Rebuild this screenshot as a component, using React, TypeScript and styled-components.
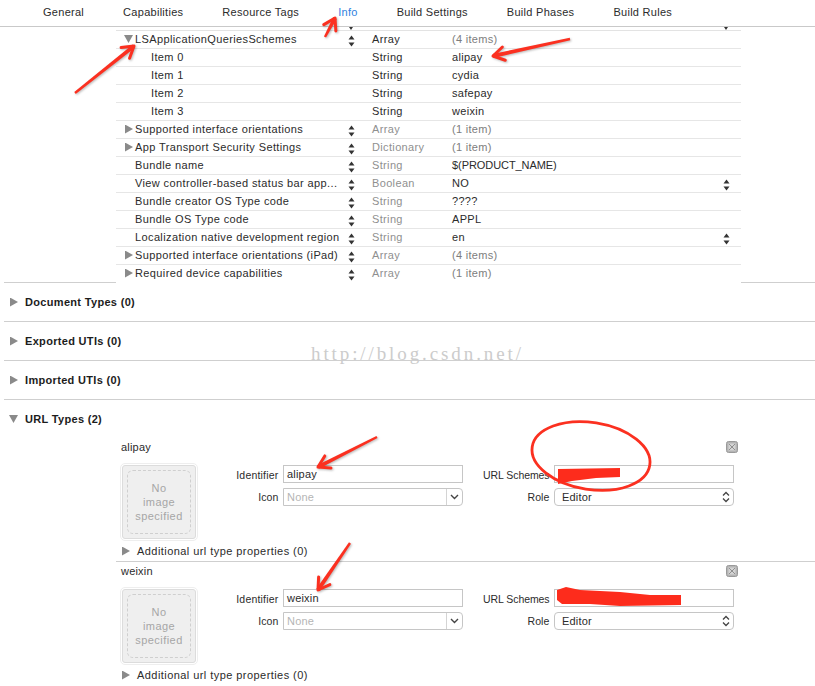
import React from "react";
import styled, { createGlobalStyle } from "styled-components";

const tabs = ["General", "Capabilities", "Resource Tags", "Info", "Build Settings", "Build Phases", "Build Rules"];

type PlistRow = {
  name: string;
  type?: string;
  value: string;
  disclosure?: "open" | "closed";
  item?: boolean;
  muted?: boolean;
  mutedValue?: boolean;
  menu?: boolean;
  tight?: boolean;
};

const plistRows: PlistRow[] = [
  { name: "LSApplicationQueriesSchemes", type: "Array", value: "(4 items)", disclosure: "open", mutedValue: true },
  { name: "Item 0", type: "String", value: "alipay", item: true },
  { name: "Item 1", type: "String", value: "cydia", item: true },
  { name: "Item 2", type: "String", value: "safepay", item: true },
  { name: "Item 3", type: "String", value: "weixin", item: true },
  { name: "Supported interface orientations", type: "Array", value: "(1 item)", disclosure: "closed", muted: true, mutedValue: true },
  { name: "App Transport Security Settings", type: "Dictionary", value: "(1 item)", disclosure: "closed", muted: true, mutedValue: true },
  { name: "Bundle name", type: "String", value: "$(PRODUCT_NAME)", muted: true, tight: true },
  { name: "View controller-based status bar app...", type: "Boolean", value: "NO", muted: true, menu: true },
  { name: "Bundle creator OS Type code", type: "String", value: "????", muted: true },
  { name: "Bundle OS Type code", type: "String", value: "APPL", muted: true },
  { name: "Localization native development region", type: "String", value: "en", muted: true, menu: true },
  { name: "Supported interface orientations (iPad)", type: "Array", value: "(4 items)", disclosure: "closed", muted: true, mutedValue: true },
  { name: "Required device capabilities", type: "Array", value: "(1 item)", disclosure: "closed", muted: true, mutedValue: true },
];

const arrows = [
  { from: [75, 93], to: [134, 46] },
  { from: [325, 37], to: [335, 18] },
  { from: [570, 39], to: [493, 56] },
  { from: [377, 437], to: [318, 467] },
  { from: [350, 543], to: [318, 590] },
];

const GlobalStyle = createGlobalStyle`
  html, body {
    margin: 0;
    padding: 0;
    background: #ffffff;
  }
  body {
    font-family: "Liberation Sans", Arial, sans-serif;
    font-size: 11px;
    color: #2b2b2b;
  }
`;

const StepperGlyph = () => (
  <StepperSvg width="7" height="12" viewBox="0 0 7 12">
    <path d="M3.5 0.5 L6.5 4.5 L0.5 4.5 Z" fill="#333" />
    <path d="M3.5 11.5 L6.5 7.5 L0.5 7.5 Z" fill="#333" />
  </StepperSvg>
);

// shaft gets thicker towards the head, like a marker stroke
const Arrow = ({ from, to }: { from: number[]; to: number[] }) => {
  const angle = Math.atan2(to[1] - from[1], to[0] - from[0]);
  const nx = -Math.sin(angle);
  const ny = Math.cos(angle);
  const barb = (offset: number) => {
    const a = angle + Math.PI + offset;
    return `${to[0] + Math.cos(a) * 13} ${to[1] + Math.sin(a) * 13}`;
  };
  const shaft = [
    [from[0] + nx * 1.2, from[1] + ny * 1.2],
    [to[0] + nx * 2, to[1] + ny * 2],
    [to[0] - nx * 2, to[1] - ny * 2],
    [from[0] - nx * 1.2, from[1] - ny * 1.2],
  ];
  return (
    <g>
      <polygon points={shaft.map((p) => p.join(",")).join(" ")} />
      <path d={`M${barb(0.55)} L${to[0]} ${to[1]} L${barb(-0.55)}`} />
    </g>
  );
};

const Annotations = () => (
  <AnnotationSvg width="815" height="686" viewBox="0 0 815 686">
    <ArrowGroup>
      {arrows.map((a, i) => (
        <Arrow key={i} from={a.from} to={a.to} />
      ))}
    </ArrowGroup>
    <ellipse cx="591" cy="456" rx="59.5" ry="33.5" transform="rotate(9 591 456)" fill="none" stroke="#fb3020" strokeWidth="2.8" />
    <path d="M558 469 L620 468 L620 477 L596 478 L572 481 L558 484 Z" fill="#fd2c1c" />
    <path d="M557 590 L566 587 L580 590 L620 592 L650 595 L681 595 L681 605 L620 606 L590 604 L562 604 L557 600 Z" fill="#fd2c1c" />
  </AnnotationSvg>
);

const CloseButton = () => (
  <CloseSvg width="12" height="12" viewBox="0 0 12 12">
    <rect x="0.5" y="0.5" width="11" height="11" rx="2" fill="#b4b4b4" stroke="#9a9a9a" />
    <rect x="2.5" y="2.5" width="7" height="7" fill="#d4d4d4" />
    <path d="M3 3 L9 9 M9 3 L3 9" stroke="#8f8f8f" strokeWidth="1" />
  </CloseSvg>
);

const UrlEntry = ({ name, identifier }: { name: string; identifier: string }) => (
  <Entry>
    <EntryTitle>
      <span>{name}</span>
      <CloseButton />
    </EntryTitle>
    <EntryBody>
      <ImageWell>
        <WellInner>
          <WellDashed>
            No
            <br />
            image
            <br />
            specified
          </WellDashed>
        </WellInner>
      </ImageWell>
      <FieldGrid>
        <FieldLabel $drop $spacing={0.2}>
          Identifier
        </FieldLabel>
        <TextField>{identifier}</TextField>
        <FieldLabel $drop $spacing={-0.08}>
          URL Schemes
        </FieldLabel>
        <TextField />
        <FieldLabel>Icon</FieldLabel>
        <ComboField>
          <ComboText>None</ComboText>
          <ComboButton>
            <svg width="9" height="6" viewBox="0 0 9 6">
              <path d="M1 1 L4.5 4.5 L8 1" fill="none" stroke="#444" strokeWidth="1.4" />
            </svg>
          </ComboButton>
        </ComboField>
        <FieldLabel>Role</FieldLabel>
        <PopupField>
          <span>Editor</span>
          <svg width="8" height="12" viewBox="0 0 8 12">
            <path d="M1 4.5 L4 1.5 L7 4.5 M1 7.5 L4 10.5 L7 7.5" fill="none" stroke="#444" strokeWidth="1.3" />
          </svg>
        </PopupField>
      </FieldGrid>
    </EntryBody>
    <AdditionalRow>
      <Disclosure />
      <span>Additional url type properties (0)</span>
    </AdditionalRow>
  </Entry>
);

const App = () => {
  return (
    <Page>
      <GlobalStyle />
      <TabBar>
        {tabs.map((t) => (
          <Tab key={t} $active={t === "Info"}>
            {t}
          </Tab>
        ))}
      </TabBar>

      <PlistTable>
        <StubRow>
          <StubGlyph />
          <StubGlyph />
        </StubRow>
        {plistRows.map((row) => (
          <Row key={row.name}>
            <DisclosureSlot>{row.disclosure && <Disclosure $open={row.disclosure === "open"} />}</DisclosureSlot>
            <KeyCell $item={row.item}>{row.name}</KeyCell>
            <StepperCell>{!row.item && <StepperGlyph />}</StepperCell>
            <TypeCell $muted={row.muted}>{row.type}</TypeCell>
            <ValueCell $muted={row.mutedValue} $tight={row.tight}>
              {row.value}
            </ValueCell>
            <MenuCell>{row.menu && <StepperGlyph />}</MenuCell>
          </Row>
        ))}
      </PlistTable>

      <TableEndDivider>
        <span />
        <span />
      </TableEndDivider>
      <SectionHeader>
        <Disclosure />
        <SectionTitle>Document Types (0)</SectionTitle>
      </SectionHeader>
      <SectionDivider />
      <SectionHeader>
        <Disclosure />
        <SectionTitle>Exported UTIs (0)</SectionTitle>
      </SectionHeader>
      <SectionDivider />
      <SectionHeader>
        <Disclosure />
        <SectionTitle>Imported UTIs (0)</SectionTitle>
      </SectionHeader>
      <SectionDivider />
      <SectionHeader>
        <Disclosure $open />
        <SectionTitle>URL Types (2)</SectionTitle>
      </SectionHeader>

      <UrlEntry name="alipay" identifier="alipay" />
      <EntryDivider />
      <UrlEntry name="weixin" identifier="weixin" />

      <Watermark>http://blog.csdn.net/</Watermark>
      <Annotations />
    </Page>
  );
};

const Page = styled.div`
  position: relative;
  width: 815px;
  height: 686px;
  overflow: hidden;
  background: #ffffff;
  line-height: 14px;
  letter-spacing: 0.2px;
`;

const TabBar = styled.div`
  display: flex;
  gap: 39px;
  height: 26px;
  box-sizing: content-box;
  padding-left: 43px;
  border-bottom: 1px solid #c9c9c9;
  letter-spacing: 0.28px;
`;

const Tab = styled.div<{ $active?: boolean }>`
  padding-top: 5px;
  color: ${(p) => (p.$active ? "#2f7fe0" : "#2b2b2b")};
`;

const PlistTable = styled.div`
  margin: 0 74px 0 116px;
`;

const StubRow = styled.div`
  position: relative;
  height: 3px;
  overflow: hidden;
  border-bottom: 1px solid #e3e3e3;
`;

const StubGlyph = styled.i`
  position: absolute;
  top: 0;
  width: 0;
  height: 0;
  border-left: 2px solid transparent;
  border-right: 2px solid transparent;
  border-top: 3px solid #333;
  left: 233px;
  &:last-child {
    left: 608px;
  }
`;

const Row = styled.div`
  display: grid;
  grid-template-columns: 19px 210px 27px 80px 1fr 18px;
  height: 18px;
  box-sizing: border-box;
  padding-bottom: 1px;
  align-items: center;
  border-bottom: 1px solid #e6e6e6;
  &:last-child {
    border-bottom-color: transparent;
  }
`;

const DisclosureSlot = styled.div`
  display: flex;
  align-items: center;
  padding-left: 9px;
`;

const Disclosure = styled.i<{ $open?: boolean }>`
  display: block;
  flex-shrink: 0;
  background: #8a8a8a;
  width: ${(p) => (p.$open ? "9px" : "8px")};
  height: ${(p) => (p.$open ? "8px" : "9px")};
  margin-left: ${(p) => (p.$open ? "-1px" : "0")};
  clip-path: ${(p) => (p.$open ? "polygon(0 0, 100% 0, 50% 100%)" : "polygon(0 0, 100% 50%, 0 100%)")};
`;

const KeyCell = styled.div<{ $item?: boolean }>`
  padding-left: ${(p) => (p.$item ? "16px" : "0")};
  white-space: nowrap;
  letter-spacing: 0.38px;
`;

const StepperCell = styled.div`
  display: flex;
  align-items: center;
  padding-left: 3px;
`;

const StepperSvg = styled.svg`
  display: block;
  margin-top: 3px;
`;

const TypeCell = styled.div<{ $muted?: boolean }>`
  color: ${(p) => (p.$muted ? "#8f8f8f" : "#2b2b2b")};
  letter-spacing: 0.35px;
`;

const ValueCell = styled.div<{ $muted?: boolean; $tight?: boolean }>`
  color: ${(p) => (p.$muted ? "#7d7d7d" : "#2b2b2b")};
  letter-spacing: ${(p) => (p.$tight ? "-0.07px" : "0.3px")};
`;

const MenuCell = styled.div`
  display: flex;
  align-items: center;
`;

const TableEndDivider = styled.div`
  display: flex;
  justify-content: space-between;
  margin: -1px 0 0 4px;
  height: 1px;
  & > span {
    display: block;
    height: 1px;
    background: #cfcfcf;
  }
  & > span:first-child {
    width: 112px;
  }
  & > span:last-child {
    width: 74px;
  }
`;

const SectionHeader = styled.div`
  display: flex;
  align-items: center;
  gap: 7px;
  height: 38px;
  padding-left: 10px;
`;

const SectionTitle = styled.div`
  font-weight: 700;
  color: #1c1c1c;
  letter-spacing: 0.32px;
`;

const SectionDivider = styled.div`
  height: 1px;
  margin-left: 4px;
  background: #cfcfcf;
`;

const Entry = styled.div`
  margin-left: 116px;
  height: 123px;
`;

const EntryDivider = styled.div`
  height: 1px;
  margin-left: 116px;
  background: #cfcfcf;
`;

const EntryTitle = styled.div`
  display: flex;
  align-items: center;
  justify-content: space-between;
  height: 18px;
  padding: 0 77px 0 5px;
`;

const CloseSvg = styled.svg`
  display: block;
`;

const EntryBody = styled.div`
  display: flex;
  margin-top: 7px;
  padding-left: 4px;
`;

const ImageWell = styled.div`
  width: 78px;
  height: 78px;
  box-sizing: border-box;
  padding: 1px;
  border: 1px solid #eeeeee;
  border-radius: 5px;
`;

const WellInner = styled.div`
  width: 100%;
  height: 100%;
  box-sizing: border-box;
  padding: 4px;
  background: #efefef;
  border: 1px solid #dcdcdc;
  border-radius: 3px;
`;

const WellDashed = styled.div`
  height: 100%;
  box-sizing: border-box;
  padding-top: 10px;
  border: 1px dashed #cfcfcf;
  border-radius: 6px;
  color: #a6a6a6;
  text-align: center;
  letter-spacing: 0.45px;
`;

const FieldGrid = styled.div`
  display: grid;
  grid-template-columns: 85px 180px 91px 180px;
  grid-auto-rows: 18px;
  row-gap: 5px;
  padding-top: 2px;
`;

const FieldLabel = styled.div<{ $drop?: boolean; $spacing?: number }>`
  padding-right: 4.5px;
  font-size: 10.5px;
  letter-spacing: ${(p) => p.$spacing ?? 0.1}px;
  line-height: ${(p) => (p.$drop ? "20px" : "18px")};
  text-align: right;
  white-space: nowrap;
`;

const TextField = styled.div`
  box-sizing: border-box;
  padding: 0 3px;
  line-height: 17px;
  background: #ffffff;
  border: 1px solid #c6c6c6;
`;

const ComboField = styled.div`
  display: flex;
  box-sizing: border-box;
  background: #ffffff;
  border: 1px solid #c6c6c6;
  border-radius: 0 4px 4px 0;
`;

const ComboText = styled.div`
  flex: 1;
  padding-left: 3px;
  line-height: 17px;
  color: #b5b5b5;
`;

const ComboButton = styled.div`
  display: flex;
  align-items: center;
  justify-content: center;
  width: 15px;
  border-left: 1px solid #d4d4d4;
`;

const PopupField = styled.div`
  display: flex;
  align-items: center;
  justify-content: space-between;
  box-sizing: border-box;
  padding: 0 3px 0 7px;
  background: #ffffff;
  border: 1px solid #c6c6c6;
  border-radius: 4px;
`;

const AdditionalRow = styled.div`
  display: flex;
  align-items: center;
  gap: 7px;
  height: 18px;
  margin-top: 1px;
  padding-left: 6px;
  letter-spacing: 0.44px;
`;

const Watermark = styled.div`
  position: absolute;
  left: 311px;
  top: 342px;
  font-family: "Liberation Serif", serif;
  font-size: 19px;
  line-height: 24px;
  letter-spacing: 2.9px;
  color: #cccccc;
  white-space: nowrap;
  pointer-events: none;
`;

const AnnotationSvg = styled.svg`
  position: absolute;
  left: 0;
  top: 0;
  pointer-events: none;
`;

const ArrowGroup = styled.g`
  fill: #fb3020;
  filter: drop-shadow(1px 1px 1px rgba(0, 0, 0, 0.28));
  & path {
    fill: none;
    stroke: #fb3020;
    stroke-width: 3;
    stroke-linecap: round;
    stroke-linejoin: round;
  }
`;

export default App;
